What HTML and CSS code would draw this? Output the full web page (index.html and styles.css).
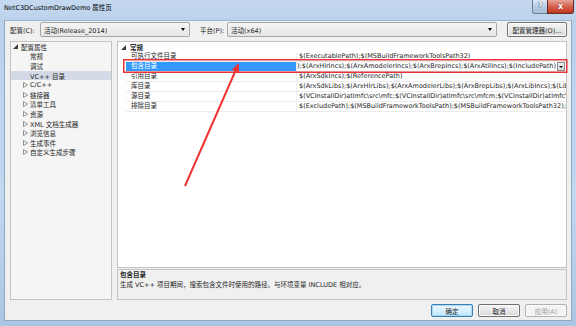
FILE: index.html
```html
<!DOCTYPE html>
<html>
<head>
<meta charset="utf-8">
<link rel="stylesheet" href="styles.css">
</head>
<body>
<div class="window">
  <div class="titlebar">
    <span class="title">NetC3DCustomDrawDemo 属性页</span>
    <div class="caption">
      <div class="cap-btn help">?</div>
      <div class="cap-btn close">x</div>
    </div>
  </div>
  <div class="client">
    <div class="config-row">
      <span class="lbl">配置(C):</span>
      <div class="combo c1"><span class="ctext">活动(Release_2014)</span><span class="dn"></span></div>
      <span class="lbl plat">平台(P):</span>
      <div class="combo c2"><span class="ctext">活动(x64)</span><span class="dn"></span></div>
      <div class="btn cfgmgr">配置管理器(O)...</div>
    </div>
    <div class="main">
      <div class="tree">
        <div class="node l0"><svg class="tri" viewBox="0 0 5 5"><path d="M5 0 L5 5 L0 5 Z" fill="#3c3c3c"/></svg>配置属性</div>
        <div class="node leaf">常规</div>
        <div class="node leaf">调试</div>
        <div class="node leaf sel">VC++ 目录</div>
        <div class="node coll"><svg class="tri" viewBox="0 0 5 6"><path d="M0.5 0.5 L4.5 3 L0.5 5.5 Z" fill="none" stroke="#7a7a7a" stroke-width="0.8"/></svg>C/C++</div>
        <div class="node coll"><svg class="tri" viewBox="0 0 5 6"><path d="M0.5 0.5 L4.5 3 L0.5 5.5 Z" fill="none" stroke="#7a7a7a" stroke-width="0.8"/></svg>链接器</div>
        <div class="node coll"><svg class="tri" viewBox="0 0 5 6"><path d="M0.5 0.5 L4.5 3 L0.5 5.5 Z" fill="none" stroke="#7a7a7a" stroke-width="0.8"/></svg>清单工具</div>
        <div class="node coll"><svg class="tri" viewBox="0 0 5 6"><path d="M0.5 0.5 L4.5 3 L0.5 5.5 Z" fill="none" stroke="#7a7a7a" stroke-width="0.8"/></svg>资源</div>
        <div class="node coll"><svg class="tri" viewBox="0 0 5 6"><path d="M0.5 0.5 L4.5 3 L0.5 5.5 Z" fill="none" stroke="#7a7a7a" stroke-width="0.8"/></svg>XML 文档生成器</div>
        <div class="node coll"><svg class="tri" viewBox="0 0 5 6"><path d="M0.5 0.5 L4.5 3 L0.5 5.5 Z" fill="none" stroke="#7a7a7a" stroke-width="0.8"/></svg>浏览信息</div>
        <div class="node coll"><svg class="tri" viewBox="0 0 5 6"><path d="M0.5 0.5 L4.5 3 L0.5 5.5 Z" fill="none" stroke="#7a7a7a" stroke-width="0.8"/></svg>生成事件</div>
        <div class="node coll"><svg class="tri" viewBox="0 0 5 6"><path d="M0.5 0.5 L4.5 3 L0.5 5.5 Z" fill="none" stroke="#7a7a7a" stroke-width="0.8"/></svg>自定义生成步骤</div>
      </div>
      <div class="right">
        <div class="grid">
          <div class="cat"><svg class="tri" viewBox="0 0 5 5"><path d="M5 0 L5 5 L0 5 Z" fill="#3c3c3c"/></svg>常规</div>
          <div class="prop"><span class="gut"></span><span class="name">可执行文件目录</span><span class="val">$(ExecutablePath);$(MSBuildFrameworkToolsPath32)</span></div>
          <div class="prop selrow"><span class="gut"></span><span class="name">包含目录</span><span class="val edit"><span class="etext">$(ArxSdkIncs);$(ArxHlrIncs);$(ArxAmodelerIncs);$(ArxBrepIncs);$(ArxAtilIncs);$(IncludePath)</span><span class="ddbtn"><span class="dn"></span></span></span></div>
          <div class="prop"><span class="gut"></span><span class="name">引用目录</span><span class="val">$(ArxSdkIncs);$(ReferencePath)</span></div>
          <div class="prop"><span class="gut"></span><span class="name">库目录</span><span class="val">$(ArxSdkLibs);$(ArxHlrLibs);$(ArxAmodelerLibs);$(ArxBrepLibs);$(ArxLibIncs);$(LibraryPath)</span></div>
          <div class="prop"><span class="gut"></span><span class="name">源目录</span><span class="val">$(VCInstallDir)atlmfc\src\mfc;$(VCInstallDir)atlmfc\src\mfcm;$(VCInstallDir)atlmfc\src\atl;$(SourcePath)</span></div>
          <div class="prop"><span class="gut"></span><span class="name">排除目录</span><span class="val">$(ExcludePath);$(MSBuildFrameworkToolsPath);$(MSBuildFrameworkToolsPath32);</span></div>
        </div>
        <div class="desc">
          <div class="dtitle">包含目录</div>
          <div class="dtext">生成 VC++ 项目期间，搜索包含文件时使用的路径。与环境变量 INCLUDE 相对应。</div>
        </div>
      </div>
    </div>
    <div class="buttons">
      <div class="btn ok">确定</div>
      <div class="btn">取消</div>
      <div class="btn disabled">应用(A)</div>
    </div>
  </div>
  <svg class="annot" width="576" height="326" viewBox="0 0 576 326">
    <rect x="123.75" y="59.75" width="443" height="12.5" fill="none" stroke="#e8343a" stroke-width="1.5"/>
    <line x1="185" y1="186" x2="235.4" y2="71" stroke="#ee3434" stroke-width="2"/>
    <path d="M239 63 L238.9 73 L231.9 69.6 Z" fill="#ee3434"/>
  </svg>
</div>
</body>
</html>
```

FILE: styles.css
```css
* { box-sizing: border-box; }
html, body { margin: 0; padding: 0; }
body {
  font-family: "DejaVu Sans", "Noto Sans CJK SC", sans-serif;
  font-size: 6.5px;
  color: #1e1e1e;
  background: #ffffff;
}
.window {
  position: relative;
  width: 576px;
  height: 326px;
  background: linear-gradient(#b9d1ec, #c3d8ef 60%, #aac5e4);
  display: flex;
  flex-direction: column;
  overflow: hidden;
}
.titlebar {
  height: 20px;
  display: flex;
  align-items: flex-start;
  background: linear-gradient(#c4d9f0, #bdd3ec);
}
.title {
  padding-left: 4px;
  line-height: 16px;
  color: #000;
  font-size: 6.5px;
}
.caption {
  margin-left: auto;
  margin-right: 2px;
  display: flex;
}
.cap-btn {
  height: 14px;
  border: 1px solid #6b7c92;
  border-top: none;
  display: flex;
  align-items: center;
  justify-content: center;
  color: #fff;
  font-weight: bold;
}
.help {
  width: 15px;
  border-radius: 0 0 0 3px;
  border-right: none;
  background: linear-gradient(#dfeaf7, #b9cde6 50%, #a6bfde);
  font-size: 8px;
  text-shadow: 0 0 1px #2d3f57, 0 0 1px #2d3f57;
}
.close {
  width: 27px;
  border-radius: 0 0 3px 0;
  border-color: #6a2a22;
  background: linear-gradient(#e7a497, #d4604e 50%, #c0371f);
  font-size: 8px;
  text-shadow: 0 0 1px #5a1208;
}
.client {
  flex: 1;
  margin: 0 4px 5px 4px;
  background: #f0f0f0;
  display: flex;
  flex-direction: column;
  border: 1px solid #8ea7c4;
  border-top-color: #9db5d0;
}
.config-row {
  display: flex;
  align-items: center;
  height: 15px;
  margin-top: 1px;
  padding-left: 5px;
}
.lbl { width: 30px; }
.plat { margin-left: 10px; width: 27px; }
.combo {
  height: 15px;
  border: 1px solid #a8a8a8;
  border-radius: 2px;
  background: linear-gradient(#f4f4f4, #e6e6e6);
  display: flex;
  align-items: center;
  padding-left: 3px;
  padding-right: 4px;
}
.c1 { width: 150px; }
.c2 { width: 270px; }
.ctext { flex: 1; }
.dn {
  width: 0;
  height: 0;
  border-left: 2.5px solid transparent;
  border-right: 2.5px solid transparent;
  border-top: 3px solid #000;
}
.btn {
  height: 13px;
  width: 42px;
  border: 1px solid #707070;
  border-radius: 2px;
  background: linear-gradient(#f5f5f5, #e8e8e8 50%, #d8d8d8);
  display: flex;
  align-items: center;
  justify-content: center;
  box-shadow: inset 0 0 0 1px #fbfbfb;
}
.cfgmgr { margin-left: 10px; width: 60px; height: 15px; }
.main {
  display: flex;
  gap: 5px;
  margin-top: 4px;
  padding: 0 4px 0 5px;
  height: 259px;
}
.tree {
  width: 102px;
  background: #f5f5f5;
  border: 1px solid #c3c3c3;
}
.node {
  height: 9.6px;
  display: flex;
  align-items: center;
  white-space: nowrap;
}
.tri { width: 5px; height: 5px; flex: none; }
.l0 { padding-left: 2px; }
.l0 .tri { margin-right: 3px; }
.leaf { padding-left: 19px; }
.coll { padding-left: 12px; }
.coll .tri { margin-right: 2px; height: 6px; }
.sel { background: #d3dae6; }
.right {
  flex: 1;
  display: flex;
  flex-direction: column;
}
.grid {
  height: 227px;
  background: #fff;
  border: 1px solid #c3c3c3;
}
.cat {
  height: 10px;
  display: flex;
  align-items: center;
  padding-left: 3px;
  font-weight: bold;
}
.cat .tri { margin-right: 4px; }
.prop {
  height: 10px;
  display: grid;
  grid-template-columns: 8px 171px 1fr;
}
.name {
  padding-left: 5px;
  border-bottom: 1px solid #ececec;
  border-right: 1px solid #ececec;
  line-height: 9px;
  white-space: nowrap;
}
.val {
  padding-left: 2px;
  border-bottom: 1px solid #ececec;
  line-height: 9px;
  white-space: nowrap;
  overflow: hidden;
}
.selrow .name {
  background: #3399ff;
  color: #fff;
}
.edit {
  display: flex;
  justify-content: flex-end;
  align-items: center;
  padding-left: 0;
  padding-right: 1px;
}
.etext { flex: none; }
.ddbtn {
  flex: none;
  width: 8px;
  height: 9px;
  margin-left: 1px;
  border: 1px solid #8a8a8a;
  background: linear-gradient(#f2f2f2, #d6d6d6);
  display: flex;
  align-items: center;
  justify-content: center;
}
.ddbtn .dn {
  border-left-width: 2px;
  border-right-width: 2px;
  border-top-width: 2.5px;
}
.desc {
  margin-top: 1px;
  flex: 1;
  border: 1px solid #c3c3c3;
  padding: 0 2px;
  line-height: 10px;
}
.dtitle { font-weight: bold; }
.buttons {
  display: flex;
  justify-content: flex-end;
  gap: 5px;
  margin-top: 4px;
  padding-right: 4px;
}
.ok {
  border-color: #3c7fb1;
  background: linear-gradient(#eaf6fd, #d9f0fc 50%, #bee6fd);
  box-shadow: inset 0 0 0 1px #a7d9f5;
}
.disabled {
  color: #9a9a9a;
  border-color: #adb2b5;
  background: #f4f4f4;
}
.annot {
  position: absolute;
  left: 0;
  top: 0;
  pointer-events: none;
}
```
